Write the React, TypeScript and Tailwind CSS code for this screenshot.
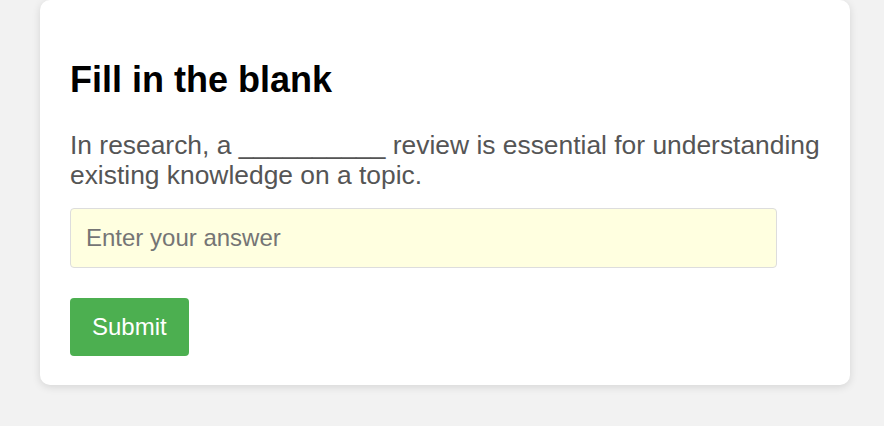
export default function App() {
  return (
    <div className="min-h-[426px] w-full bg-[#f2f2f2] pl-[40px]" style={{ fontFamily: '"Liberation Sans", Arial, sans-serif' }}>
      <div className="w-[810px] rounded-[10px] bg-white px-[30px] pt-[30px] pb-[29px] shadow-[0_2px_8px_rgba(0,0,0,0.12)]">
        <h2 className="mt-[29px] text-[36px] font-bold leading-[41px] text-black">Fill in the blank</h2>
        <p className="mt-[30px] text-[26.4px] leading-[30.4px] text-[#555555]">
          In research, a __________ review is essential for understanding existing knowledge on a topic.
        </p>
        <input
          type="text"
          placeholder="Enter your answer"
          className="mt-[17px] block h-[60px] w-[707px] rounded-[4px] border border-[#dddddd] bg-[#ffffe0] px-[15px] text-[24px] text-[#333] outline-none placeholder:text-[#757575]"
        />
        <button className="mt-[30px] block h-[58px] rounded-[4px] bg-[#4caf50] px-[22px] text-[24px] text-white">
          Submit
        </button>
      </div>
    </div>
  );
}
